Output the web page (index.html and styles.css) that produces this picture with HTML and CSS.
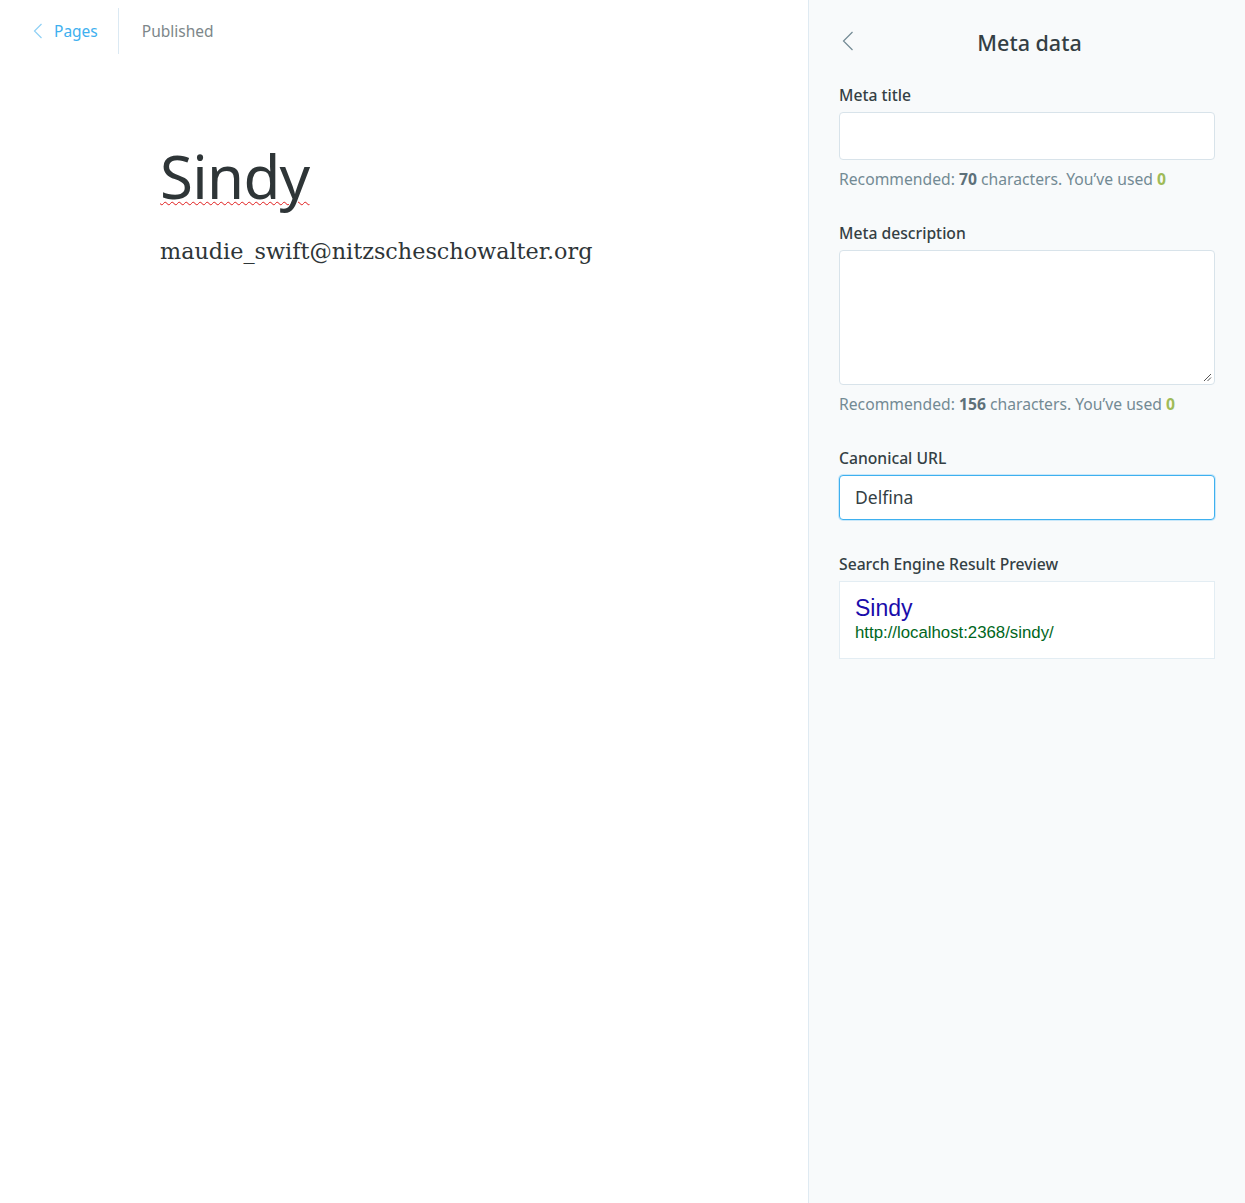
FILE: index.html
```html
<!DOCTYPE html>
<html lang="en">
<head>
<meta charset="utf-8">
<title>Sindy - Pages</title>
<link rel="stylesheet" href="styles.css">
</head>
<body>
<div class="app">
  <main class="editor">
    <header class="editor-header">
      <a class="back-link" href="#">
        <svg class="chev" width="10" height="16" viewBox="0 0 10 16"><path d="M8.5 1 L1.5 8 L8.5 15" fill="none" stroke="currentColor" stroke-width="1.2"/></svg>
        <span>Pages</span>
      </a>
      <span class="divider"></span>
      <span class="status">Published</span>
    </header>
    <article class="content">
      <h1 class="title"><span class="misspelled">Sindy</span></h1>
      <p class="body-text">maudie_swift@nitzscheschowalter.org</p>
    </article>
  </main>
  <aside class="settings">
    <div class="settings-header">
      <button class="settings-back" type="button">
        <svg width="12" height="20" viewBox="0 0 12 20"><path d="M10.5 1 L1.5 10 L10.5 19" fill="none" stroke="currentColor" stroke-width="1.2"/></svg>
      </button>
      <h2 class="settings-title">Meta data</h2>
    </div>
    <div class="form">
      <div class="field">
        <label class="label">Meta title</label>
        <div class="input"></div>
        <p class="help">Recommended: <b>70</b> characters. You’ve used <span class="used">0</span></p>
      </div>
      <div class="field">
        <label class="label">Meta description</label>
        <div class="textarea">
          <svg class="grip" width="10" height="10" viewBox="0 0 10 10"><path d="M9 2 L2 9 M9 5.5 L5.5 9" stroke="#555" stroke-width="1" fill="none"/></svg>
        </div>
        <p class="help">Recommended: <b>156</b> characters. You’ve used <span class="used">0</span></p>
      </div>
      <div class="field">
        <label class="label">Canonical URL</label>
        <div class="input focused">Delfina</div>
      </div>
      <div class="field">
        <label class="label">Search Engine Result Preview</label>
        <div class="serp">
          <div class="serp-title">Sindy</div>
          <div class="serp-url">http://localhost:2368/sindy/</div>
        </div>
      </div>
    </div>
  </aside>
</div>
</body>
</html>
```

FILE: styles.css
```css
* { box-sizing: border-box; }
html, body { margin: 0; padding: 0; }
body {
  font-family: "Noto Sans", "Open Sans", sans-serif;
  color: #343f44;
  background: #fff;
}
.app {
  display: flex;
  min-height: 1203px;
}
.editor {
  width: 808px;
  flex: none;
  background: #fff;
}
.editor-header {
  display: flex;
  align-items: center;
  height: 62px;
  padding: 8px 0 8px 33px;
}
.back-link {
  display: flex;
  align-items: center;
  gap: 11px;
  color: #3eb0ef;
  text-decoration: none;
  font-size: 15.5px;
  height: 46px;
  padding-right: 20px;
}
.chev { color: #8fd0f5; }
.divider {
  width: 1px;
  height: 46px;
  background: #dbe9f3;
}
.status {
  font-size: 15.5px;
  color: #7d878a;
  padding-left: 23px;
}
.content {
  padding: 76px 0 0 160px;
}
.title {
  margin: 0;
  font-size: 60px;
  font-weight: 400;
  line-height: 76px;
  color: #2e3537;
  letter-spacing: -0.7px;
}
.misspelled {
  text-decoration: underline wavy #e01b1b;
  text-decoration-thickness: 1px;
  text-underline-offset: 2px;
}
.body-text {
  margin: 22px 0 0;
  font-family: "DejaVu Serif", Georgia, serif;
  font-size: 22.3px;
  line-height: 30px;
  color: #2e3537;
}
.settings {
  flex: 1;
  background: #f8fafb;
  border-left: 1px solid #dfeaf2;
  padding: 0 30px 0 30px;
}
.settings-header {
  display: flex;
  align-items: center;
  height: 85px;
  padding-bottom: 1px;
}
.settings-back {
  border: 0;
  background: none;
  padding: 0 0 0 3px;
  color: #738a94;
  display: flex;
  align-items: center;
  margin-top: -2px;
}
.settings-title {
  flex: 1;
  margin: 0 0 0 -10px;
  text-align: center;
  font-size: 21.5px;
  font-weight: 500;
  color: #343f44;
}
.form {
  display: flex;
  flex-direction: column;
}
.field {
  margin-bottom: 34px;
}
.label {
  display: block;
  font-size: 15.7px;
  font-weight: 500;
  color: #343f44;
  line-height: 20px;
  margin-bottom: 7px;
}
.input {
  height: 48px;
  background: #fff;
  border: 1px solid #d8e3ea;
  border-radius: 4px;
  font-size: 17.5px;
  line-height: 44px;
  padding: 0 15px;
  color: #343f44;
}
.input.focused {
  height: 45px;
  line-height: 42px;
  margin-top: 2px;
  border: 1.5px solid #3eb0ef;
  box-shadow: 0 0 0 1px #c9e8fa;
}
.textarea {
  position: relative;
  height: 135px;
  background: #fff;
  border: 1px solid #d8e3ea;
  border-radius: 4px;
}
.grip {
  position: absolute;
  right: 2px;
  bottom: 2px;
}
.help {
  margin: 9px 0 0;
  font-size: 15.7px;
  line-height: 20px;
  color: #738a94;
}
.help b { color: #5d7079; font-weight: 700; }
.help .used { color: #9fbb58; font-weight: 700; }
.serp {
  background: #fff;
  border: 1px solid #e3edf3;
  height: 78px;
  padding: 12px 15px 0;
  font-family: "Liberation Sans", Arial, sans-serif;
}
.serp-title {
  font-size: 23px;
  line-height: 28px;
  color: #1a0dab;
}
.serp-url {
  font-size: 16.8px;
  line-height: 22px;
  color: #006621;
}
```
